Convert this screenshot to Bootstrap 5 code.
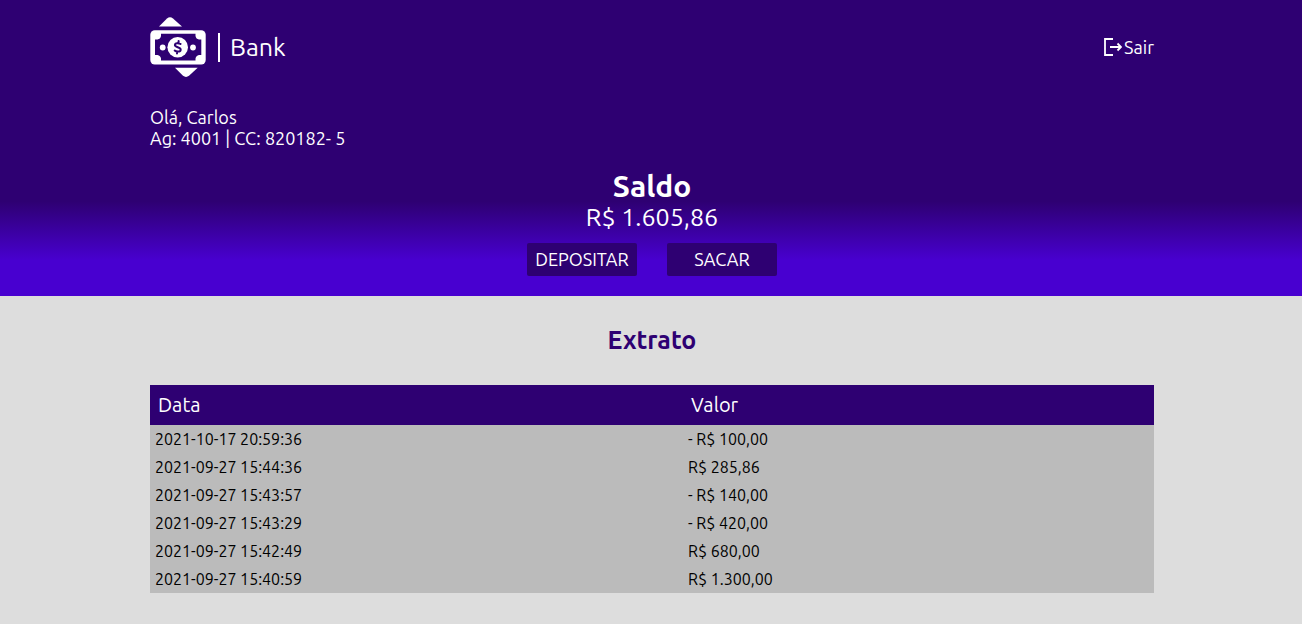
<!DOCTYPE html>
<html lang="pt-BR">
<head>
<meta charset="utf-8">
<meta name="viewport" content="width=device-width, initial-scale=1">
<title>Bank</title>
<link href="https://cdn.jsdelivr.net/npm/bootstrap@5.3.0/dist/css/bootstrap.min.css" rel="stylesheet">
<style>
:root { --deep: #2e0072; --bright: #4800d0; }
body { font-family: Ubuntu, "Noto Sans", "Open Sans", sans-serif; background: #ddd; color: #000; font-size: 16px; }
.page-gutter { padding-left: 150px; padding-right: 148px; }
.top { background: linear-gradient(var(--deep) 68%, var(--bright) 88%); padding-top: 16px; padding-bottom: 20px; }
.brand { font-size: 25px; line-height: 29px; }
.brand-name { border-left: 2px solid #fff; padding-left: 10px; margin-left: 12px; }
.exit, .account { font-size: 18px; line-height: 21px; }
.exit { gap: 2px; }
.account { margin-top: 29px; }
.balance { margin-top: 20px; }
.balance h1 { font-size: 30px; line-height: 34px; font-weight: 700; }
.amount { font-size: 25px; line-height: 29px; }
.actions { gap: 30px; margin-top: 11px; }
.btn-bank { --bs-btn-bg: var(--deep); --bs-btn-color: #fff; --bs-btn-hover-bg: #230058; --bs-btn-hover-color: #fff; --bs-btn-border-width: 0; --bs-btn-border-radius: 2px; --bs-btn-padding-x: 0; --bs-btn-padding-y: 6px; --bs-btn-font-size: 18px; --bs-btn-line-height: 21px; width: 110px; }
.statement h2 { font-size: 25px; line-height: 29px; font-weight: 700; color: var(--deep); margin: 30px 0; }
.ledger { --bs-table-bg: #bbb; --bs-table-color: #000; table-layout: fixed; }
.ledger th { background: var(--deep); color: #fff; font-weight: 400; font-size: 20px; line-height: 24px; padding: 8px; }
.ledger th:last-child { width: 471px; }
.ledger td { padding: 4px 5px; line-height: 20px; font-size: 16px; }
</style>
</head>
<body>
<header class="top page-gutter text-white">
  <nav class="d-flex justify-content-between align-items-center">
    <a href="#" class="brand d-flex align-items-center text-white text-decoration-none">
      <svg width="56" height="62" viewBox="0 0 56 62" fill="#fff" aria-hidden="true">
        <path d="M9 10.500 17 2.400Q20 0 23 2.400L32 10.500z"/>
        <path d="M25 51.700H47.700L39 59.800Q36 62 33 59.800z"/>
        <rect x=".3" y="14.200" width="55.400" height="34.300" rx="4.500"/>
        <path fill="#2e0072" d="M11 17.700H45.500V20Q46 23 49 23.500H51.300V39H49Q46 39.500 45.500 42.500V44.600H11V42.500Q10.500 39.500 7.500 39H5V23.500H7.500Q10.500 23 11 20z"/>
        <circle cx="27.700" cy="31.200" r="10.300"/><circle cx="12.700" cy="31.500" r="2.900"/><circle cx="43" cy="31.500" r="2.900"/>
        <path fill="none" stroke="#2e0072" stroke-width="2" stroke-linecap="round" d="M30.500 27.900C29 27 25 26.400 24.900 29C24.800 31.500 31 31 30.700 33.800C30.300 36.300 26 35.900 24.700 34.500M28.600 25V27M27 36V37.600"/>
      </svg>
      <span class="brand-name">Bank</span>
    </a>
    <a href="#" class="exit d-flex align-items-center text-white text-decoration-none">
      <svg width="18" height="18" viewBox="0 0 18 18" fill="none" stroke="#fff" stroke-width="1.800" aria-hidden="true"><path d="M9 1H1V17H9M6 9H17M13.500 5.500 17 9 13.500 12.500"/></svg>
      <span>Sair</span>
    </a>
  </nav>
  <div class="account"><div>Olá, Carlos</div><div>Ag: 4001 | CC: 820182- 5</div></div>
  <section class="balance text-center">
    <h1 class="m-0">Saldo</h1>
    <div class="amount">R$ 1.605,86</div>
    <div class="actions d-flex justify-content-center">
      <button type="button" class="btn btn-bank">DEPOSITAR</button>
      <button type="button" class="btn btn-bank">SACAR</button>
    </div>
  </section>
</header>
<main class="statement page-gutter pb-4">
  <h2 class="text-center">Extrato</h2>
  <table class="table table-borderless ledger m-0">
    <thead><tr><th scope="col">Data</th><th scope="col">Valor</th></tr></thead>
    <tbody>
      <tr><td>2021-10-17 20:59:36</td><td>- R$ 100,00</td></tr>
      <tr><td>2021-09-27 15:44:36</td><td>R$ 285,86</td></tr>
      <tr><td>2021-09-27 15:43:57</td><td>- R$ 140,00</td></tr>
      <tr><td>2021-09-27 15:43:29</td><td>- R$ 420,00</td></tr>
      <tr><td>2021-09-27 15:42:49</td><td>R$ 680,00</td></tr>
      <tr><td>2021-09-27 15:40:59</td><td>R$ 1.300,00</td></tr>
    </tbody>
  </table>
</main>
<script src="https://cdn.jsdelivr.net/npm/bootstrap@5.3.0/dist/js/bootstrap.bundle.min.js"></script>
</body>
</html>
